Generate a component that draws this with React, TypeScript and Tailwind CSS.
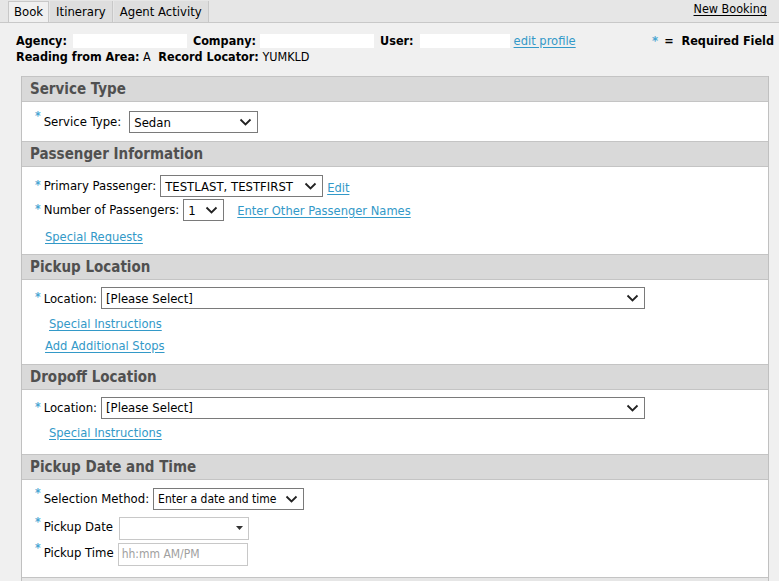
import React from "react";

const F = { fontFamily: 'Tahoma, "DejaVu Sans Condensed", "Liberation Sans", sans-serif' };

function Chevron() {
  return (
    <svg width={13} height={8} viewBox="0 0 13 8" className="shrink-0">
      <path d="M1.5 1.5 L6.5 6.5 L11.5 1.5" fill="none" stroke="#222" strokeWidth="1.8" />
    </svg>
  );
}

function Select({ text, w, className = "", textCls = "text-[13px]" }: { text: string; w: string; className?: string; textCls?: string }) {
  return (
    <div className={`flex h-[22px] items-center justify-between border border-[#7a7a7a] bg-white pl-[4px] pr-[5px] text-black ${w} ${className}`}>
      <span className={`whitespace-nowrap leading-none ${textCls}`}>{text}</span>
      <Chevron />
    </div>
  );
}

function Star({ up }: { up?: boolean }) {
  return (
    <span className={`mr-[3px] inline-block text-[12px] font-bold leading-none text-[#4aa6d2] ${up ? "-translate-y-[6px]" : "-translate-y-[1px]"}`}>*</span>
  );
}

function Link({ children, className = "" }: { children: React.ReactNode; className?: string }) {
  return <span className={`text-[12.8px] text-[#3399c8] underline underline-offset-[2px] ${className}`}>{children}</span>;
}

function Header({ title }: { title: string }) {
  return (
    <div className="flex h-[26px] items-center border-y border-[#c4c4c4] bg-[#d9d9d9] pl-[8px] text-[15px] font-bold text-[#505050]">
      {title}
    </div>
  );
}

export default function App() {
  return (
    <div style={F} className="h-[581px] w-[779px] overflow-hidden bg-[#f0f0f0] text-[12px] text-black">
      {/* Tab bar */}
      <div className="flex h-[23px] items-end border-b border-[#c8c8c8] bg-[#e6e6e6] pl-[8px]">
        <div className="flex h-[21px] items-center border-x border-t border-[#c8c8c8] bg-[#f0f0f0] px-[5px] text-[13px]">Book</div>
        <div className="ml-[1px] flex h-[21px] items-center border-r border-[#c8c8c8] bg-[#dedede] px-[6px] text-[13px]">Itinerary</div>
        <div className="ml-[1px] flex h-[21px] items-center border-r border-[#c8c8c8] bg-[#dedede] px-[6px] text-[13px]">Agent Activity</div>
        <div className="mb-[3px] ml-auto mr-[12px] text-[12.5px] underline underline-offset-[2px]">New Booking</div>
      </div>

      {/* Info */}
      <div className="mt-[10px] flex h-[16px] items-center pl-[16px] text-[12.5px] leading-[16px]">
        <span className="font-bold">Agency:</span>
        <span className="ml-[6px] h-[14px] w-[114px] bg-white" />
        <span className="ml-[6px] font-bold">Company:</span>
        <span className="ml-[4px] h-[14px] w-[114px] bg-white" />
        <span className="ml-[6px] font-bold">User:</span>
        <span className="ml-[6px] h-[14px] w-[90px] bg-white" />
        <Link className="ml-[4px]">edit profile</Link>
        <span className="ml-auto mr-[5px] flex items-center">
          <span className="text-[13px] font-bold text-[#4aa6d2]">*</span>
          <span className="ml-[6px] font-bold">=</span>
          <span className="ml-[8px] font-bold">Required Field</span>
        </span>
      </div>
      <div className="h-[16px] pl-[16px] text-[12.5px] leading-[16px]">
        <span className="font-bold">Reading from Area:</span> A <span className="ml-[4px] font-bold">Record Locator:</span> YUMKLD
      </div>

      {/* Panel */}
      <div className="ml-[21px] mt-[11px] w-[748px] border-x border-b border-[#c0c0c0] bg-white">
        <Header title="Service Type" />
        <div className="flex items-center pb-[8px] pl-[13px] pt-[9px]">
          <Star up />
          <span className="text-[13px]">Service Type:</span>
          <Select text="Sedan" w="w-[129px]" className="ml-[8px]" />
        </div>

        <Header title="Passenger Information" />
        <div className="pb-[8px] pl-[13px] pt-[8px]">
          <div className="flex items-center">
            <Star />
            <span className="text-[13px]">Primary Passenger:</span>
            <Select text="TESTLAST, TESTFIRST" w="w-[163px]" className="ml-[4px]" />
            <Link className="ml-[4px] mt-[3px]">Edit</Link>
          </div>
          <div className="mt-[2px] flex items-center">
            <Star />
            <span className="text-[13px]">Number of Passengers:</span>
            <Select text="1" w="w-[41px]" className="ml-[4px]" />
            <Link className="ml-[13px]">Enter Other Passenger Names</Link>
          </div>
          <div className="mt-[6px] pl-[10px]">
            <Link>Special Requests</Link>
          </div>
        </div>

        <Header title="Pickup Location" />
        <div className="pb-[9px] pl-[13px] pt-[7px]">
          <div className="flex items-center">
            <Star />
            <span className="text-[13px]">Location:</span>
            <Select text="[Please Select]" w="w-[544px]" className="ml-[4px]" />
          </div>
          <div className="mt-[5px] pl-[14px]">
            <Link>Special Instructions</Link>
          </div>
          <div className="mt-[2px] pl-[10px]">
            <Link>Add Additional Stops</Link>
          </div>
        </div>

        <Header title="Dropoff Location" />
        <div className="pb-[12px] pl-[13px] pt-[7px]">
          <div className="flex items-center">
            <Star />
            <span className="text-[13px]">Location:</span>
            <Select text="[Please Select]" w="w-[544px]" className="ml-[4px]" />
          </div>
          <div className="mt-[4px] pl-[14px]">
            <Link>Special Instructions</Link>
          </div>
        </div>

        <Header title="Pickup Date and Time" />
        <div className="pb-[11px] pl-[13px] pt-[8px]">
          <div className="flex items-center">
            <Star up />
            <span className="text-[13px]">Selection Method:</span>
            <Select text="Enter a date and time" w="w-[151px]" className="ml-[4px]" textCls="text-[12px]" />
          </div>
          <div className="mt-[7px] flex items-start">
            <Star />
            <span className="text-[13px]">Pickup Date</span>
            <div className="ml-[6px] flex h-[23px] w-[130px] items-center justify-end border border-[#c8c8c8] bg-white pr-[5px]">
              <svg width="7" height="4" viewBox="0 0 7 4"><path d="M0 0 L7 0 L3.5 4 Z" fill="#333" /></svg>
            </div>
          </div>
          <div className="mt-[3px] flex items-start">
            <Star />
            <span className="text-[13px]">Pickup Time</span>
            <div className="ml-[4px] flex h-[23px] w-[130px] items-center border border-[#c8c8c8] bg-white pl-[3px] text-[12px] text-[#a0a0a0]">
              hh:mm AM/PM
            </div>
          </div>
        </div>
        <div className="h-[6px] border-t border-[#c4c4c4] bg-[#e6e6e6]" />
      </div>
    </div>
  );
}
